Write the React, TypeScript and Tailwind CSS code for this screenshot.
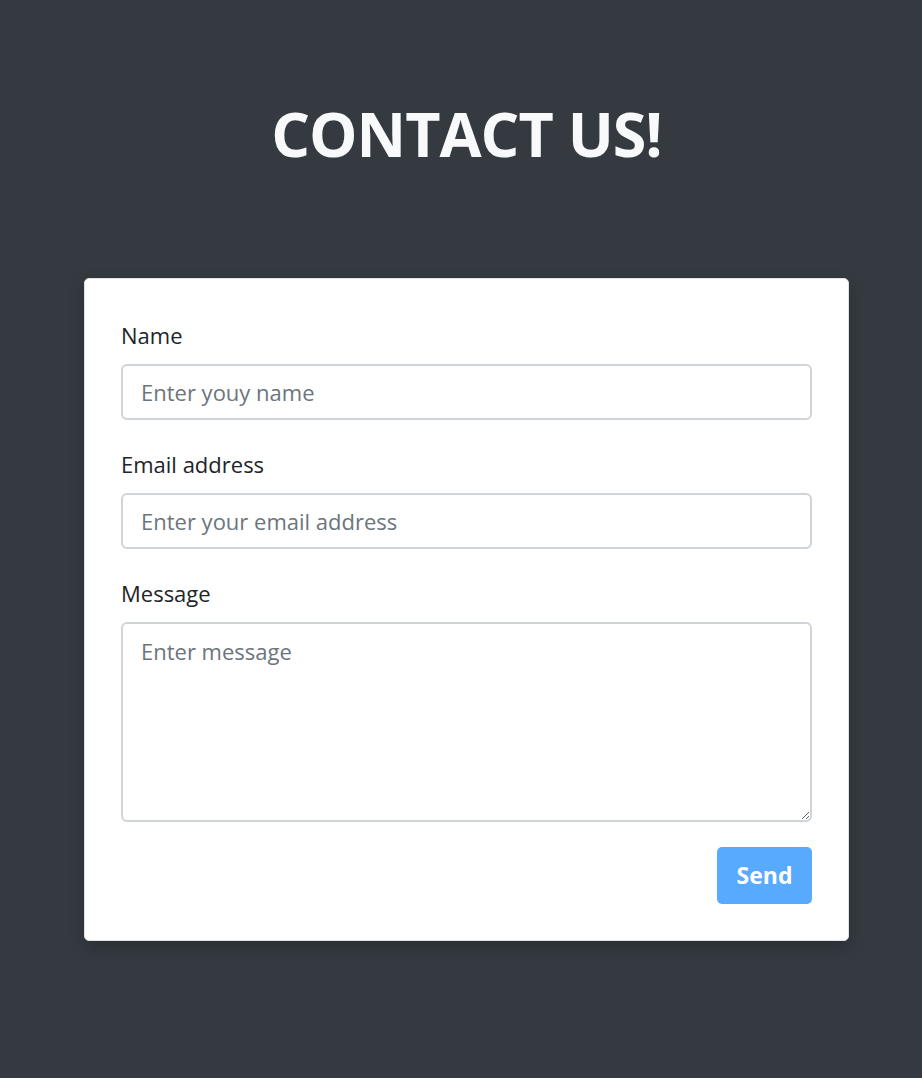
import React from 'react';

const fieldClass =
    'w-full rounded-[6px] border-2 border-[#ced4da] bg-white px-[18px] text-[22px] text-[#212529] placeholder:text-[#6c757d] outline-none';

const labelClass = 'mb-[12px] block text-[22px] leading-[33px] text-[#212529]';

const App: React.FC = () => {
    return (
        <div
            className="min-h-[1078px] bg-[#343a40] pl-[11px] pt-[98px]"
            style={{ fontFamily: '"Open Sans", "Noto Sans", sans-serif' }}
        >
            <h1 className="text-center text-[61px] font-bold leading-[72px] tracking-[-1px] text-[#f8f9fa]">CONTACT US!</h1>

            <form className="mx-auto mt-[108px] w-[765px] rounded-[5px] border border-[#dee2e6] bg-white px-[36px] pb-[36px] pt-[40px] shadow-[0_6px_16px_rgba(0,0,0,0.2)]">
                <label className={labelClass}>Name</label>
                <input type="text" placeholder="Enter youy name" className={`${fieldClass} h-[56px]`} />

                <label className={`${labelClass} mt-[28px]`}>Email address</label>
                <input type="email" placeholder="Enter your email address" className={`${fieldClass} h-[56px]`} />

                <label className={`${labelClass} mt-[28px]`}>Message</label>
                <textarea placeholder="Enter message" className={`${fieldClass} block h-[200px] pt-[11px] pb-[6px] leading-[33px]`} />

                <div className="mt-[25px] flex justify-end">
                    <button
                        type="button"
                        className="h-[57px] w-[95px] rounded-[5px] bg-[#58aaff] text-[23px] font-bold text-white"
                    >
                        Send
                    </button>
                </div>
            </form>
        </div>
    );
};

export default App;
